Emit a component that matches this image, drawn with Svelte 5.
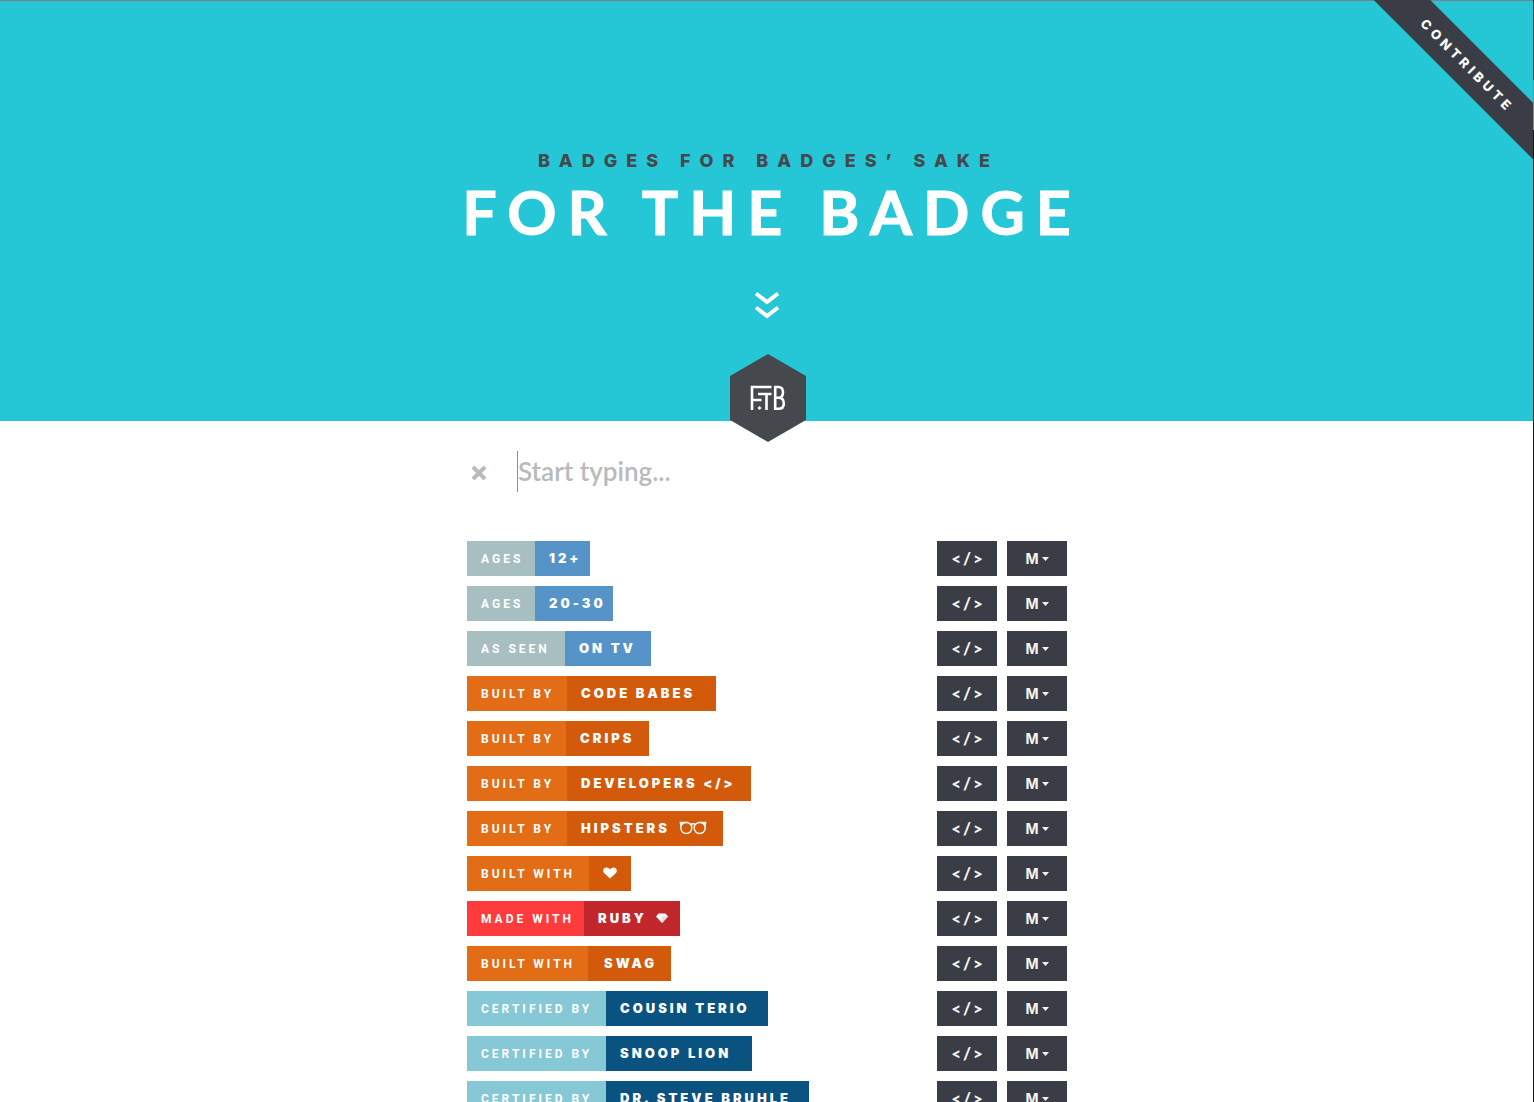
<script>
  const badges = [
    { theme: 'sky', label: 'Ages', value: '12+', left: 68, right: 55 },
    { theme: 'sky', label: 'Ages', value: '20-30', left: 68, right: 78 },
    { theme: 'sky', label: 'As seen', value: 'On TV', left: 98, right: 86 },
    { theme: 'orange', label: 'Built by', value: 'Code babes', left: 100, right: 149 },
    { theme: 'orange', label: 'Built by', value: 'Crips', left: 99, right: 83 },
    { theme: 'orange', label: 'Built by', value: 'Developers </>', left: 100, right: 184 },
    { theme: 'orange', label: 'Built by', value: 'Hipsters', icon: 'glasses', left: 100, right: 156 },
    { theme: 'orange', label: 'Built with', value: '', icon: 'heart', left: 122, right: 42 },
    { theme: 'red', label: 'Made with', value: 'Ruby', icon: 'gem', left: 117, right: 96 },
    { theme: 'orange', label: 'Built with', value: 'Swag', left: 121, right: 83, roomy: true },
    { theme: 'blue', label: 'Certified by', value: 'Cousin Terio', left: 139, right: 162 },
    { theme: 'blue', label: 'Certified by', value: 'Snoop Lion', left: 139, right: 146 },
    { theme: 'blue', label: 'Certified by', value: 'Dr. Steve Bruhle', left: 139, right: 203 }
  ];
  let query = $state('');
  const shown = $derived(
    badges.filter((b) => `${b.label} ${b.value}`.toLowerCase().includes(query.toLowerCase()))
  );
</script>

<div class="page">
  <header class="hero">
    <a class="ribbon" href="#contribute">Contribute</a>
    <p class="tagline">Badges for badges’ sake</p>
    <h1>For the badge</h1>
    <a class="down" href="#badges" aria-label="Scroll to badges">
      <svg width="26" height="28" viewBox="0 0 26 28" fill="none" stroke="#fff" stroke-width="4">
        <path d="M2 2.5 13 11 24 2.5M2 16.5 13 25 24 16.5" />
      </svg>
    </a>
    <svg class="logo" width="76" height="88" viewBox="0 0 76 88" role="img" aria-label="FTB">
      <path d="M38 0 76 22V66L38 88 0 66V22Z" fill="#45484d" />
      <g fill="none" stroke="#fff" stroke-width="2.6">
        <path d="M22 56V33H41.500M22 46H31.500M28 40H41.500M36.500 40V56" />
        <path d="M45.200 33V54.800H48.500C52 54.800 53.800 53 53.800 49.400 53.800 46 52 43.800 48.500 43.800H45.200M48.500 43.800C51.500 43.800 53 41.500 53 38.300 53 35 51.500 33 48.500 33H44" />
      </g>
      <path d="M29.500 52 31.500 54 29.500 56 27.500 54Z" fill="#fff" />
    </svg>
  </header>

  <main id="badges">
    <form class="search" onsubmit={(e) => e.preventDefault()}>
      <button type="button" class="clear" aria-label="Clear search" onclick={() => (query = '')}>
        <svg width="16" height="16" viewBox="0 0 16 16" stroke="#b9babb" stroke-width="4">
          <path d="M2 2 14 14M14 2 2 14" />
        </svg>
      </button>
      <input type="text" aria-label="Search badges" placeholder="Start typing..." bind:value={query} />
    </form>

    <ul>
      {#each shown as badge}
        <li>
          <div class="badge {badge.theme}">
            <span class="label" style:width="{badge.left}px">{badge.label}</span>
            <span class="value" class:roomy={badge.roomy} style:width="{badge.right}px">
              {#if badge.value}<span>{badge.value}</span>{/if}
              {#if badge.icon === 'glasses'}
                <svg width="28" height="14" viewBox="0 0 28 14" aria-label="glasses">
                  <g fill="none" stroke="#fff" stroke-width="1.4">
                    <circle cx="7.300" cy="7" r="5.500" />
                    <circle cx="20.700" cy="7" r="5.500" />
                    <path d="M11.500 3.500Q14 2 16.500 3.500" />
                  </g>
                  <path d="M.5.800H9L3.500 3 1.500 6ZM27.500.800H19L24.500 3 26.500 6Z" fill="#fff" />
                </svg>
              {:else if badge.icon === 'heart'}
                <svg width="14" height="12" viewBox="0 0 14 12" fill="#fff" aria-label="love">
                  <path d="M7 11.500 1 6C-.5 4.200 0 .5 3.500.5 5.300.5 6.500 1.500 7 2.500 7.500 1.500 8.700.5 10.500.5 14 .5 14.500 4.200 13 6Z" />
                </svg>
              {:else if badge.icon === 'gem'}
                <svg width="12" height="10" viewBox="0 0 12 10" aria-label="gem">
                  <path d="M2.500.5H9.500L12 3.500 6 10 0 3.500Z" fill="#fff" />
                  <path d="M6 3.500H12L6 10Z" fill="#e6dfe0" />
                </svg>
              {/if}
            </span>
          </div>
          <div class="actions">
            <button type="button" aria-label="Copy HTML">&lt;/&gt;</button>
            <button type="button" class="format" aria-label="Copy Markdown">
              M<svg width="7" height="4" viewBox="0 0 7 4"><path d="M0 0H7L3.500 4Z" fill="#f5f5f2" /></svg>
            </button>
          </div>
        </li>
      {/each}
    </ul>
  </main>
</div>

<style>
  :global(body) {
    background: #fff;
  }
  .page {
    position: relative;
    height: 100vh;
    overflow: hidden;
    font-family: Lato, 'Liberation Sans', sans-serif;
  }
  .page::after {
    content: '';
    position: absolute;
    top: 0;
    right: 0;
    bottom: 0;
    width: 1px;
    background: linear-gradient(#10305a 0 80px, #8a8a88 80px 130px, #14181d 130px);
  }
  .hero {
    position: relative;
    display: flex;
    flex-direction: column;
    align-items: center;
    box-sizing: border-box;
    height: 421px;
    padding-top: 150px;
    border-top: 1px solid #7b8082;
    background: #25c7d6;
    text-transform: uppercase;
    clip-path: inset(0 0 -30px 0);
  }
  .ribbon {
    position: absolute;
    top: 0;
    right: -16px;
    box-sizing: border-box;
    width: 260px;
    height: 40px;
    padding-left: 4px;
    background: #3a3d45;
    color: #fff;
    font: 800 13px/40px Inter, sans-serif;
    letter-spacing: 4px;
    text-align: center;
    text-decoration: none;
    transform: translate(46px, 43px) rotate(45deg);
  }
  .tagline {
    margin: 0;
    padding-left: 3px;
    color: #45484d;
    font: 800 18px/20px Inter, sans-serif;
    letter-spacing: 9px;
  }
  h1 {
    margin: 0;
    padding-left: 10px;
    color: #fff;
    font: 700 61px/82px Lato, sans-serif;
    letter-spacing: 11px;
    white-space: nowrap;
    -webkit-text-stroke: 1px #fff;
  }
  .down {
    margin-top: 38px;
    line-height: 0;
  }
  .logo {
    position: absolute;
    left: calc(50% - 37px);
    bottom: -21px;
  }
  main {
    max-width: 600px;
    margin: 0 auto;
  }
  .search {
    display: flex;
    align-items: center;
    height: 41px;
    padding-top: 30px;
  }
  .clear {
    width: 50px;
    padding: 2px 0 0 4px;
    border: 0;
    background: none;
    text-align: left;
    line-height: 0;
  }
  .search input {
    flex: 1;
    box-sizing: border-box;
    height: 41px;
    padding: 0;
    border: 0;
    border-left: 1px solid #8b8e94;
    outline: 0;
    color: #45484d;
    font: 600 26px/41px Lato, sans-serif;
  }
  .search input::placeholder {
    color: #b9babb;
    opacity: 1;
  }
  ul {
    display: grid;
    gap: 10px;
    margin: 49px 0 0;
    padding: 0;
    list-style: none;
  }
  li {
    display: flex;
    justify-content: space-between;
  }
  .badge {
    display: flex;
    height: 35px;
    color: #fff;
    text-transform: uppercase;
    white-space: nowrap;
  }
  .label,
  .value {
    box-sizing: border-box;
    padding-left: 14px;
  }
  .label {
    height: 35px;
    font: 700 12px/36px Roboto, sans-serif;
    letter-spacing: 3px;
  }
  .value {
    display: flex;
    align-items: center;
    gap: 9px;
    padding-bottom: 1px;
    font: 900 13px/33px Inter, sans-serif;
    letter-spacing: 3px;
  }
  .roomy {
    padding-left: 16px;
  }
  .sky .label { background: #a7bfc1; }
  .sky .value { background: #5593c8; }
  .orange .label { background: #e36c16; }
  .orange .value { background: #d25a0a; }
  .red .label { background: #ff3b3e; }
  .red .value { background: #c1272d; }
  .blue .label { background: #87c8d6; }
  .blue .value { background: #0a5280; }
  .actions {
    display: flex;
    gap: 10px;
  }
  .actions button {
    display: flex;
    align-items: center;
    justify-content: center;
    gap: 3px;
    width: 60px;
    height: 35px;
    padding: 0 0 0 2px;
    border: 0;
    background: #3a3d45;
    color: #f5f5f2;
    font: 900 17px/35px Lato, sans-serif;
    letter-spacing: 2px;
  }
  .actions .format {
    padding: 0;
    font: 700 14px/35px Inter, sans-serif;
    letter-spacing: 0;
  }
</style>
